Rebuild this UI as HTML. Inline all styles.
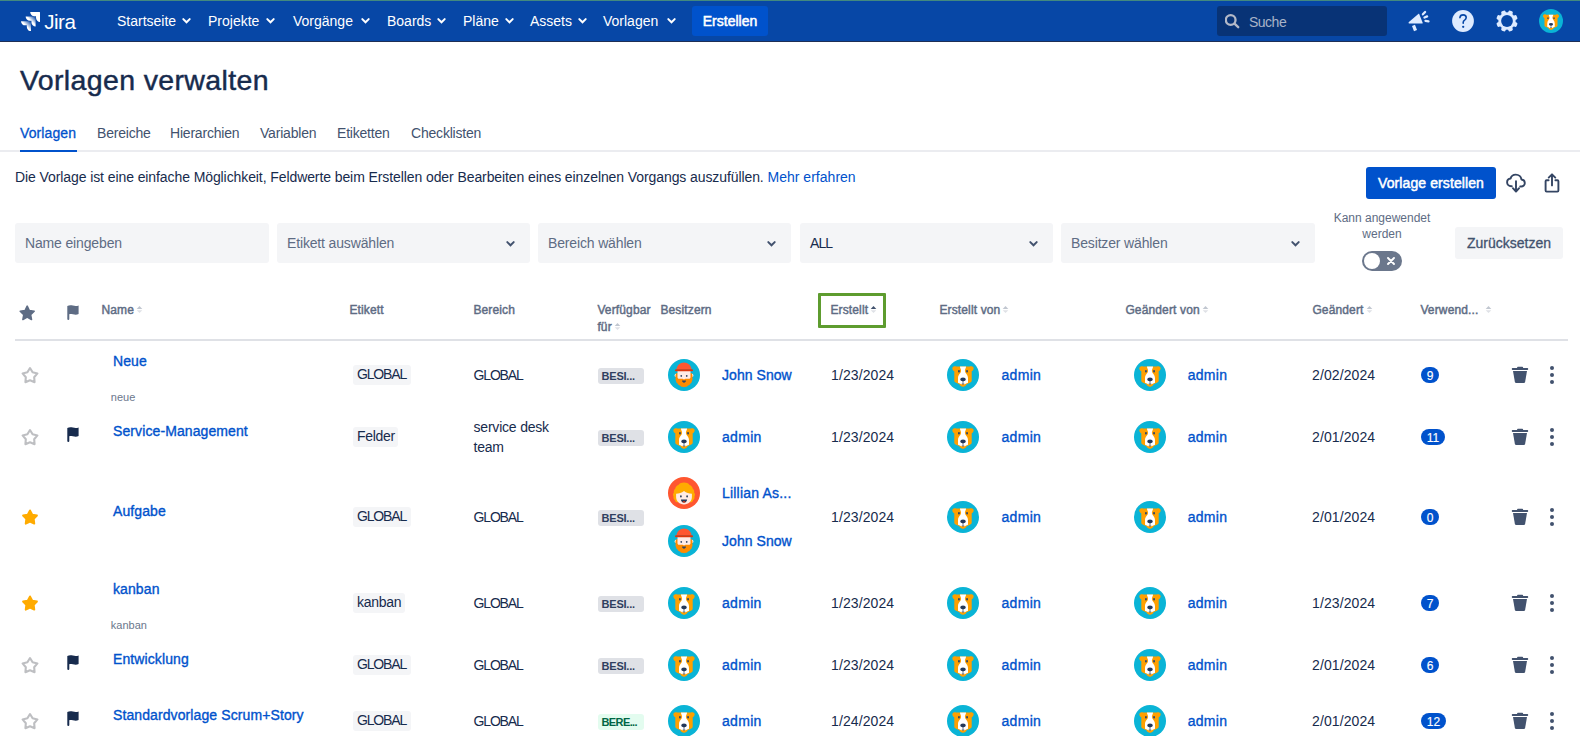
<!DOCTYPE html>
<html lang="de">
<head>
<meta charset="utf-8">
<title>Vorlagen verwalten - Jira</title>
<style>
*{box-sizing:border-box;margin:0;padding:0}
html,body{width:1580px;height:736px;overflow:hidden;background:#fff}
body{font-family:"Liberation Sans",sans-serif;font-size:14px;color:#172B4D;position:relative;-webkit-font-smoothing:antialiased}
a{text-decoration:none;color:inherit}
svg{display:block}
.abs{position:absolute;white-space:nowrap}

/* ---------- top navigation ---------- */
#hdr{position:absolute;left:0;top:0;width:1580px;height:42px;background:#0747A6;border-top:1px solid #43897F;border-bottom:1px solid #1F2F55}
#hdr .logo{position:absolute;left:20.900px;top:10.800px}
#hdr .logotxt{position:absolute;left:44.200px;top:8.800px;font-size:20.600px;line-height:24px;color:#fff;letter-spacing:-0.500px}
#hdr .nav{position:absolute;top:0;height:41px;line-height:41px;color:#fff;font-size:14px;white-space:nowrap}
#hdr .chev{position:absolute;top:16px;color:#fff}
#hdr .create{position:absolute;left:692px;top:5px;width:76px;height:30px;border-radius:3px;background:#0052CC;color:#fff;font-size:14px;line-height:31px;text-align:center;-webkit-text-stroke:.500px #fff}
#hdr .search{position:absolute;left:1217px;top:5px;width:170px;height:30px;border-radius:3px;background:#083376}
#hdr .search span{position:absolute;left:32px;top:0;line-height:32px;font-size:14px;color:#A9B3C8;letter-spacing:-0.5px}
#hdr .search svg{position:absolute;left:8px;top:7px}
#hdr .ico{position:absolute}

/* ---------- page header ---------- */
#title{left:20px;top:62px;font-size:28.500px;line-height:36px;letter-spacing:.360px;font-weight:400;color:#172B4D;-webkit-text-stroke:0.45px #172B4D}
#tabs{position:absolute;left:0;top:117px;width:1580px;height:35px;border-bottom:2px solid #EBECF0}
#tabs a{position:absolute;top:0;line-height:32px;font-size:14px;color:#42526E;white-space:nowrap;letter-spacing:-.200px}
#tabs a.on{color:#0052CC;-webkit-text-stroke:0.3px #0052CC;letter-spacing:.100px}
#tabs .bar{position:absolute;left:20px;top:33px;width:57px;height:2px;background:#0052CC}
#desc{left:15px;top:167px;line-height:20px;font-size:14px;color:#172B4D;letter-spacing:-.090px}
#desc a{color:#0052CC;letter-spacing:.020px}
.btnp{position:absolute;left:1366px;top:167px;width:130px;height:32px;border-radius:3px;background:#0052CC;color:#fff;font-size:14px;line-height:33px;text-align:center;-webkit-text-stroke:.500px #fff;letter-spacing:.100px}

/* ---------- filters ---------- */
.fld{position:absolute;top:223px;height:40px;border-radius:3px;background:#F4F5F7;color:#5E6C84;font-size:14px;line-height:40px;padding-left:10px;white-space:nowrap;letter-spacing:-.150px}
.fld.dark{color:#172B4D}
.fld svg{position:absolute;right:14.500px;top:16.500px}
#kann{left:1322px;top:210px;width:120px;text-align:center;font-size:12px;line-height:16px;color:#5E6C84;white-space:normal}
#tog{position:absolute;left:1362px;top:251px;width:40px;height:20px;border-radius:10px;background:#6B778C}
#tog i{position:absolute;left:2px;top:2px;width:16px;height:16px;border-radius:50%;background:#fff}
#tog svg{position:absolute;left:24.700px;top:6px}
#reset{position:absolute;left:1455px;top:227px;width:108px;height:32px;border-radius:3px;background:#F4F5F7;color:#42526E;font-size:14px;line-height:32px;text-align:center;-webkit-text-stroke:0.3px #42526E}

/* ---------- table ---------- */
#thead{position:absolute;left:15px;top:293px;width:1553px;height:48px;border-bottom:2px solid #DFE1E6}
#thead .th{position:absolute;top:8.700px;font-size:12px;line-height:17px;font-weight:400;color:#5E6C84;white-space:nowrap;letter-spacing:.140px;margin-left:.400px;-webkit-text-stroke:.450px #5E6C84}
#thead .sort{display:inline-block;vertical-align:middle;margin-left:2px;position:relative;top:-1px}
#thead .focus{position:absolute;left:803px;top:0;width:68px;height:35px;border:3px solid #5E9C2F;border-radius:1px}
.row{position:absolute;left:15px;width:1553px}
.row>*{position:absolute;white-space:nowrap}
.vc{top:50%;transform:translateY(-50%)}
.nm{left:98px;font-size:14px;line-height:20px;color:#0052CC;-webkit-text-stroke:0.35px #0052CC;letter-spacing:.100px}
.ds{left:95.800px;font-size:11px;line-height:14px;color:#6B778C}
.tag{left:338.200px;height:20px;padding:0 4px 0 3.800px;border-radius:3px;background:#F4F5F7;line-height:18.800px;font-size:14px;color:#172B4D}
.ber{left:458.500px;font-size:14px;line-height:20px}
.loz{left:583px;margin-top:.900px;width:46px;height:16px;border-radius:3px;background:#DFE1E6;color:#2F3F60;font-size:11px;font-weight:700;line-height:16px;padding-left:3.500px;letter-spacing:-0.2px}
.loz.g{background:#E3FCEF;color:#006644}
.av{width:32px;height:32px}
.lnk{font-size:14px;line-height:20px;color:#0052CC;-webkit-text-stroke:0.35px #0052CC;letter-spacing:.300px}
.dt{font-size:14px;line-height:20px;color:#172B4D;letter-spacing:.100px}
.bdg{left:1406px;height:16px;min-width:18px;padding:0 5.800px;border-radius:8px;background:#0052CC;color:#fff;font-size:12px;line-height:18px;text-align:center;-webkit-text-stroke:.150px #fff}

.st{left:5px}
.fl{left:52.300px;top:50%;margin-top:-9.800px;color:#172B4D}
.o1{left:653px}.o2{left:707px}
.c1{left:816px}
.e1{left:932px}.e2{left:986.500px}
.g1{left:1119px}.g2{left:1172.700px}
.c2{left:1297px}
.tr{left:1496px}.mo{left:1534px}
.up{letter-spacing:-1.150px}
.tag.up{padding-right:4.500px}
.tag.lo{letter-spacing:-.300px;padding-right:3.600px}
</style>
</head>
<body>

<!-- ======= Top navigation ======= -->
<div id="hdr">
  <svg class="logo" width="19.200" height="19.200" viewBox="0 0 24.400 24.400">
    <defs>
      <linearGradient id="lg1" x1="17.800" y1="5.900" x2="12.700" y2="11.200" gradientUnits="userSpaceOnUse"><stop offset=".15" stop-color="#fff" stop-opacity=".15"/><stop offset="1" stop-color="#fff"/></linearGradient>
      <linearGradient id="lg2" x1="12.100" y1="11.700" x2="6.300" y2="17.400" gradientUnits="userSpaceOnUse"><stop offset=".15" stop-color="#fff" stop-opacity=".15"/><stop offset="1" stop-color="#fff"/></linearGradient>
    </defs>
    <path d="M23.400 0H11.700a5.300 5.300 0 0 0 5.300 5.300h2.100v2.100a5.300 5.300 0 0 0 5.300 5.300V1a1 1 0 0 0-1-1z" fill="#fff"/>
    <path d="M17.600 5.800H5.900a5.300 5.300 0 0 0 5.300 5.300h2.100v2.100a5.300 5.300 0 0 0 5.300 5.300V6.800a1 1 0 0 0-1-1z" fill="url(#lg1)"/>
    <path d="M11.700 11.700H0a5.300 5.300 0 0 0 5.300 5.300h2.100v2.100a5.300 5.300 0 0 0 5.300 5.300V12.700a1 1 0 0 0-1-1z" fill="url(#lg2)"/>
  </svg>
  <span class="logotxt">Jira</span>
  <span class="nav" style="left:117px">Startseite</span>
  <span class="nav" style="left:208px">Projekte</span>
  <span class="nav" style="left:293px">Vorgänge</span>
  <span class="nav" style="left:387px">Boards</span>
  <span class="nav" style="left:463px">Pläne</span>
  <span class="nav" style="left:530px">Assets</span>
  <span class="nav" style="left:603px">Vorlagen</span>
  <svg class="chev" style="left:182px" width="10" height="8"><use href="#chev"/></svg>
  <svg class="chev" style="left:266px" width="10" height="8"><use href="#chev"/></svg>
  <svg class="chev" style="left:361px" width="10" height="8"><use href="#chev"/></svg>
  <svg class="chev" style="left:437px" width="10" height="8"><use href="#chev"/></svg>
  <svg class="chev" style="left:505px" width="10" height="8"><use href="#chev"/></svg>
  <svg class="chev" style="left:578px" width="10" height="8"><use href="#chev"/></svg>
  <svg class="chev" style="left:667px" width="10" height="8"><use href="#chev"/></svg>
  <a class="create">Erstellen</a>
  <div class="search"><svg width="16" height="16" viewBox="0 0 16 16"><circle cx="5.700" cy="7" r="4.850" fill="none" stroke="#B3B9C8" stroke-width="2.300"/><path d="M9.500 10.700l3.700 3.500" stroke="#B3B9C8" stroke-width="2.400" stroke-linecap="round"/></svg><span>Suche</span></div>
  <svg class="ico" style="left:1408px;top:9px" width="24" height="24" viewBox="0 0 24 24"><path d="M10.300 3.900c.3-.3.900-.2 1 .3l3.400 8.600c.2.400-.1.800-.6.800H1.500c-.9 0-1.300-1-.6-1.600z" fill="#DEEBFF"/><path d="M5.500 15.400l2 5.200" stroke="#DEEBFF" stroke-width="3.200" stroke-linecap="butt"/><path d="M14.900 4.300l2.200-2.300M16.500 7.500l2.600-1.100M17.500 10.800l3 .5" stroke="#DEEBFF" stroke-width="2.300" stroke-linecap="round"/></svg>
  <svg class="ico" style="left:1452px;top:9px" width="22" height="22" viewBox="0 0 22 22"><circle cx="11" cy="11" r="10.900" fill="#DEEBFF"/><path d="M7.900 7.600c.2-1.700 1.500-2.700 3.200-2.700 1.800 0 3.100 1.100 3.100 2.700 0 1.200-.7 1.900-1.600 2.500-1 .6-1.400 1.100-1.400 2.300v.9" fill="none" stroke="#0747A6" stroke-width="1.600" stroke-linecap="round"/><circle cx="11.200" cy="16.800" r="1.150" fill="#0747A6"/></svg>
  <svg class="ico" style="left:1495px;top:8px" width="24" height="24" viewBox="0 0 24 24"><g fill="#DEEBFF" transform="rotate(22.500 12 12)"><circle cx="12" cy="12" r="8.700"/><rect id="tooth" x="9.700" y="1.200" width="4.600" height="5" rx="1.400"/><use href="#tooth" transform="rotate(45 12 12)"/><use href="#tooth" transform="rotate(90 12 12)"/><use href="#tooth" transform="rotate(135 12 12)"/><use href="#tooth" transform="rotate(180 12 12)"/><use href="#tooth" transform="rotate(225 12 12)"/><use href="#tooth" transform="rotate(270 12 12)"/><use href="#tooth" transform="rotate(315 12 12)"/></g><circle cx="12" cy="12" r="5.900" fill="#0747A6"/></svg>
  <svg class="ico" style="left:1539px;top:8px" width="24" height="24"><use href="#dog"/></svg>
</div>

<!-- ======= Page heading ======= -->
<h1 id="title" class="abs">Vorlagen verwalten</h1>

<div id="tabs">
  <a class="on" style="left:20px">Vorlagen</a>
  <a style="left:97px">Bereiche</a>
  <a style="left:170px">Hierarchien</a>
  <a style="left:260px">Variablen</a>
  <a style="left:337px">Etiketten</a>
  <a style="left:411px">Checklisten</a>
  <span class="bar"></span>
</div>

<p id="desc" class="abs">Die Vorlage ist eine einfache Möglichkeit, Feldwerte beim Erstellen oder Bearbeiten eines einzelnen Vorgangs auszufüllen. <a>Mehr erfahren</a></p>
<a class="btnp">Vorlage erstellen</a>
<svg class="abs" style="left:1505px;top:172px" width="22" height="22" viewBox="0 0 22 22"><path d="M6.800 14.200H6.200c-2.300 0-4.100-1.700-4.100-3.900 0-2 1.500-3.600 3.500-3.800C6.200 4.200 8.300 2.600 10.800 2.600c2.900 0 5.300 2.100 5.600 4.900 1.900.2 3.400 1.700 3.400 3.600 0 1.900-1.600 3.400-3.600 3.400h-1" fill="none" stroke="#344563" stroke-width="1.900" stroke-linecap="round" stroke-linejoin="round"/><path d="M11 9.200v9.600M7.900 16.200l3.100 3.300 3.100-3.300" fill="none" stroke="#344563" stroke-width="1.900" stroke-linecap="round" stroke-linejoin="round"/></svg>
<svg class="abs" style="left:1542px;top:172px" width="20" height="22" viewBox="0 0 20 22"><path d="M6.600 8.200H4.600c-.6 0-1 .4-1 1v9.400c0 .6.400 1 1 1h10.800c.6 0 1-.4 1-1V9.200c0-.6-.4-1-1-1h-2" fill="none" stroke="#344563" stroke-width="1.900" stroke-linecap="round" stroke-linejoin="round"/><path d="M10 13.400V3M6.700 5.600L10 2.300l3.300 3.300" fill="none" stroke="#344563" stroke-width="1.900" stroke-linecap="round" stroke-linejoin="round"/></svg>

<!-- ======= Filters ======= -->
<div class="fld" style="left:15px;width:254px">Name eingeben</div>
<div class="fld" style="left:277px;width:253px">Etikett auswählen<svg width="10" height="8" style="color:#42526E"><use href="#chev"/></svg></div>
<div class="fld" style="left:538px;width:253px">Bereich wählen<svg width="10" height="8" style="color:#42526E"><use href="#chev"/></svg></div>
<div class="fld dark" style="left:800px;width:253px;letter-spacing:-.900px">ALL<svg width="10" height="8" style="color:#42526E"><use href="#chev"/></svg></div>
<div class="fld" style="left:1061px;width:254px">Besitzer wählen<svg width="10" height="8" style="color:#42526E"><use href="#chev"/></svg></div>
<div id="kann" class="abs">Kann angewendet werden</div>
<div id="tog"><i></i><svg width="8" height="8" viewBox="0 0 8 8"><path d="M1 1l6 6M7 1L1 7" stroke="#fff" stroke-width="1.900" stroke-linecap="round"/></svg></div>
<a id="reset">Zurücksetzen</a>

<!-- ======= SVG symbol library (icons / avatars only) ======= -->
<svg width="0" height="0" style="position:absolute">
  <defs>
    <symbol id="dog" viewBox="0 0 32 32">
      <circle cx="16" cy="16" r="16" fill="#0AB4D6"/>
      <path d="M9.300 7.500H22.700C23.800 6.900 25.600 7 26.400 8.300 27 9.600 26.600 11.300 24.700 12.300V21.600C24.700 22.600 24.200 23.200 23.400 23.500L19.600 25.200C19.200 26.600 17.800 27.400 16 27.400S12.800 26.600 12.400 25.200L8.600 23.500C7.800 23.200 7.300 22.600 7.300 21.600V12.300C5.400 11.300 5 9.600 5.600 8.300 6.400 7 8.200 6.900 9.300 7.500Z" fill="#FFA000"/>
      <path d="M12.900 7.500h6.200c-.2 1.700-1.200 2.600-1.200 4.300 0 2.400 3.100 3.600 3.100 7.400v4.500l-2.400 1c-.5.9-1.400 1.300-2.600 1.300s-2.100-.4-2.600-1.300l-2.400-1v-4.500c0-3.800 3.100-5 3.100-7.400 0-1.700-1-2.600-1.200-4.300z" fill="#fff"/>
      <path d="M13 25.200h6c-.4 1.500-1.500 2.300-3 2.300s-2.600-.8-3-2.300z" fill="#FFA000"/>
      <rect x="11" y="11.100" width="1.900" height="2.300" rx=".9" fill="#344563"/>
      <rect x="19.100" y="11.100" width="1.900" height="2.300" rx=".9" fill="#344563"/>
      <ellipse cx="16" cy="20.400" rx="2.800" ry="1.800" fill="#253858"/>
      <path d="M16 21.500v2.300" stroke="#253858" stroke-width=".8"/>
      <path d="M14.600 24.400h2.800c-.2.700-.7 1-1.400 1s-1.200-.3-1.400-1z" fill="#253858"/>
    </symbol>
    <symbol id="man" viewBox="0 0 32 32">
      <circle cx="16" cy="16" r="16" fill="#0AB4D6"/>
      <ellipse cx="7.900" cy="16.400" rx="1.300" ry="1.600" fill="#FFEBE6"/>
      <ellipse cx="24.100" cy="16.400" rx="1.300" ry="1.600" fill="#FFEBE6"/>
      <path d="M8.300 14.300c.5-.5 1-.5 1.400 0l.9 4.500h10.800l.9-4.500c.4-.5.900-.5 1.400 0 .6 1.500 1.200 3.200.6 4.700.6 1.100.2 2.200-.4 2.900.1 1.200-.6 2.100-1.600 2.600-.2 1.100-1.100 1.900-2.300 2-.6 1.100-1.700 1.600-2.900 1.300-.7.600-1.500.6-2.200 0-1.200.3-2.300-.2-2.900-1.300-1.200-.1-2.100-.9-2.300-2-1-.5-1.700-1.400-1.600-2.600-.6-.7-1-1.800-.4-2.900-.6-1.500 0-3.200.6-4.700z" fill="#FF8B00"/>
      <path d="M9.500 12h13v6.200c0 .9-.6 1.500-1.500 1.500h-3.600l-1.400.9-1.400-.9H11c-.9 0-1.500-.6-1.500-1.500z" fill="#FFEBE6"/>
      <path d="M8.500 10.600c.3-4.100 3.500-7 7.500-7s7.200 2.900 7.500 7z" fill="#FF5630"/>
      <rect x="7" y="10.200" width="18" height="2" rx="1" fill="#DE350B"/>
      <rect x="12.400" y="16" width="1.700" height="1.900" rx=".8" fill="#344563"/>
      <rect x="17.900" y="16" width="1.700" height="1.900" rx=".8" fill="#344563"/>
      <path d="M14 21.600h4c-.1 1.400-.9 2.100-2 2.100s-1.900-.7-2-2.100z" fill="#344563"/>
    </symbol>
    <symbol id="woman" viewBox="0 0 32 32">
      <circle cx="16" cy="16" r="16" fill="#FF5630"/>
      <path d="M16 5.600c2.300 0 4.300.8 5.600 2.300 1.700.6 2.900 2 3.200 3.800 1.200 1 1.700 2.500 1.300 3.900 1 1.100 1.200 2.600.400 3.800.3 1.400-.2 2.800-1.400 3.600-.2 1.100-.9 1.900-2 2.200H8.900c-1.100-.3-1.800-1.100-2-2.200-1.200-.8-1.700-2.200-1.400-3.600-.8-1.200-.6-2.700.400-3.800-.4-1.400.1-2.900 1.300-3.900.3-1.800 1.500-3.200 3.200-3.800 1.300-1.500 3.300-2.300 5.600-2.300z" fill="#FFAB00"/>
      <path d="M8.100 16.800c2.900-.1 5.600-.9 7.900-2.800 2.300 1.900 5 2.700 7.900 2.800v3.300c0 4.300-3.500 7.400-7.900 7.400s-7.900-3.100-7.900-7.400z" fill="#FFEBE6"/>
      <rect x="12" y="18.300" width="1.800" height="2.100" rx=".9" fill="#344563"/>
      <rect x="18.200" y="18.300" width="1.800" height="2.100" rx=".9" fill="#344563"/>
      <path d="M12.900 22.400h6.200c-.1 2-1.400 3.200-3.100 3.200s-3-1.200-3.100-3.200z" fill="#253858"/>
      <path d="M14.500 24.900c.4-.6.9-.9 1.500-.9s1.100.3 1.500.9c-.4.400-.9.700-1.500.7s-1.100-.3-1.500-.7z" fill="#DE350B"/>
    </symbol>
    <symbol id="star-o" viewBox="0 0 20 20">
      <path d="M10.00 3.05L12.59 7.29L17.42 8.44L14.18 12.21L14.58 17.16L10.00 15.25L5.42 17.16L5.82 12.21L2.58 8.44L7.41 7.29z" fill="none" stroke="#BEBFC2" stroke-width="2.100" stroke-linejoin="round"/>
    </symbol>
    <symbol id="star-f" viewBox="0 0 20 20">
      <path d="M10.00 3.45L12.29 7.59L16.94 8.49L13.71 11.96L14.29 16.66L10.00 14.65L5.71 16.66L6.29 11.96L3.06 8.49L7.71 7.59z" fill="#FFAB00" stroke="#FFAB00" stroke-width="1.900" stroke-linejoin="round"/>
    </symbol>
    <symbol id="flag" viewBox="0 0 12 15">
      <path d="M.300 1.100C1.900.1 3.900.1 5.900.6s3.900.6 5.700-.2v8.700c-1.800.8-3.700.7-5.700.2s-2.700-.5-3.600-.1v4.800a1 1 0 0 1-2 0z" fill="currentColor"/>
    </symbol>
    <symbol id="trash" viewBox="0 0 18 18">
      <path d="M6.100 1.600c0-.5.300-.8.800-.8h4.400c.5 0 .8.300.8.800v.4h4.100c.6 0 1 .4 1 1s-.4 1-1 1H1.800c-.6 0-1-.4-1-1s.4-1 1-1h4.300z" fill="#42526E"/>
      <path d="M2 5.100h14l-1.900 11c-.1.500-.4.800-.9.800H4.800c-.5 0-.8-.3-.9-.8z" fill="#42526E"/>
    </symbol>
    <symbol id="more" viewBox="0 0 6 20">
      <circle cx="3" cy="3" r="2" fill="#42526E"/><circle cx="3" cy="10" r="2" fill="#42526E"/><circle cx="3" cy="17" r="2" fill="#42526E"/>
    </symbol>
    <symbol id="sort" viewBox="0 0 7 11">
      <path d="M3.500 2.100L6.300 4.900H.700z" fill="#C1C7D0"/><path d="M3.500 9.100L6.300 6.300H.700z" fill="#DFE1E6"/>
    </symbol>
    <symbol id="sort-up" viewBox="0 0 7 11">
      <path d="M3.500 2.100L6.300 4.900H.700z" fill="#42526E"/><path d="M3.500 9.100L6.300 6.300H.700z" fill="#DFE1E6"/>
    </symbol>
    <symbol id="chev" viewBox="0 0 10 8">
      <path d="M1.300 2.100L4.500 5.300l3.200-3.200" fill="none" stroke="currentColor" stroke-width="2" stroke-linecap="round" stroke-linejoin="miter"/>
    </symbol>
  </defs>
</svg>

<!-- ======= Table ======= -->
<div id="thead">
  <svg class="abs" style="left:2.800px;top:10.500px;color:#5E6C84" width="18.400" height="18.400" viewBox="0 0 20 20"><path d="M10 2.300l2.300 4.900 5.300.7-3.900 3.700 1 5.300L10 14.300l-4.700 2.600 1-5.300-3.900-3.700 5.300-.7z" fill="#5E6C84" stroke="#5E6C84" stroke-width="1.700" stroke-linejoin="round"/></svg>
  <svg class="abs" style="left:52.300px;top:12.200px;color:#5E6C84" width="12" height="15"><use href="#flag"/></svg>
  <span class="th" style="left:86px">Name<svg class="sort" width="7" height="11"><use href="#sort"/></svg></span>
  <span class="th" style="left:334px">Etikett</span>
  <span class="th" style="left:458px">Bereich</span>
  <span class="th" style="left:582px">Verfügbar<br>für<svg class="sort" width="7" height="11"><use href="#sort"/></svg></span>
  <span class="th" style="left:645px">Besitzern</span>
  <span class="focus"></span>
  <span class="th" style="left:815px">Erstellt<svg class="sort" width="7" height="11"><use href="#sort-up"/></svg></span>
  <span class="th" style="left:924px">Erstellt von<svg class="sort" width="7" height="11"><use href="#sort"/></svg></span>
  <span class="th" style="left:1110px">Geändert von<svg class="sort" width="7" height="11"><use href="#sort"/></svg></span>
  <span class="th" style="left:1297px">Geändert<svg class="sort" width="7" height="11"><use href="#sort"/></svg></span>
  <span class="th" style="left:1405px">Verwend...<svg class="sort" style="margin-left:6.500px" width="7" height="11"><use href="#sort"/></svg></span>
</div>

<!-- row 1 -->
<div class="row" style="top:341px;height:68px">
  <svg class="vc st" width="20" height="20"><use href="#star-o"/></svg>
  <a class="nm" style="top:10px">Neue</a>
  <span class="ds" style="top:49px">neue</span>
  <span class="tag vc up">GLOBAL</span>
  <span class="ber vc up">GLOBAL</span>
  <span class="loz vc">BESI...</span>
  <svg class="av vc o1"><use href="#man"/></svg><a class="lnk vc o2" style="letter-spacing:.050px">John Snow</a>
  <span class="dt vc c1">1/23/2024</span>
  <svg class="av vc e1"><use href="#dog"/></svg><a class="lnk vc e2">admin</a>
  <svg class="av vc g1"><use href="#dog"/></svg><a class="lnk vc g2">admin</a>
  <span class="dt vc c2">2/02/2024</span>
  <span class="bdg vc">9</span>
  <svg class="vc tr" width="18" height="18"><use href="#trash"/></svg>
  <svg class="vc mo" width="6" height="20"><use href="#more"/></svg>
</div>

<!-- row 2 -->
<div class="row" style="top:409px;height:56px">
  <svg class="vc st" width="20" height="20"><use href="#star-o"/></svg>
  <svg class="fl" width="12" height="15"><use href="#flag"/></svg>
  <a class="nm" style="top:12px">Service-Management</a>
  <span class="tag vc lo">Felder</span>
  <span class="ber vc" style="white-space:normal;width:88px;letter-spacing:-.200px">service desk team</span>
  <span class="loz vc">BESI...</span>
  <svg class="av vc o1"><use href="#dog"/></svg><a class="lnk vc o2">admin</a>
  <span class="dt vc c1">1/23/2024</span>
  <svg class="av vc e1"><use href="#dog"/></svg><a class="lnk vc e2">admin</a>
  <svg class="av vc g1"><use href="#dog"/></svg><a class="lnk vc g2">admin</a>
  <span class="dt vc c2">2/01/2024</span>
  <span class="bdg vc">11</span>
  <svg class="vc tr" width="18" height="18"><use href="#trash"/></svg>
  <svg class="vc mo" width="6" height="20"><use href="#more"/></svg>
</div>

<!-- row 3 -->
<div class="row" style="top:465px;height:104px">
  <svg class="vc st" width="20" height="20"><use href="#star-f"/></svg>
  <a class="nm" style="top:36px">Aufgabe</a>
  <span class="tag vc up">GLOBAL</span>
  <span class="ber vc up">GLOBAL</span>
  <span class="loz vc">BESI...</span>
  <svg class="av o1" style="top:12px"><use href="#woman"/></svg><a class="lnk o2" style="top:18px;letter-spacing:.200px">Lillian As...</a>
  <svg class="av o1" style="top:60px"><use href="#man"/></svg><a class="lnk o2" style="top:66px;letter-spacing:.050px">John Snow</a>
  <span class="dt vc c1">1/23/2024</span>
  <svg class="av vc e1"><use href="#dog"/></svg><a class="lnk vc e2">admin</a>
  <svg class="av vc g1"><use href="#dog"/></svg><a class="lnk vc g2">admin</a>
  <span class="dt vc c2">2/01/2024</span>
  <span class="bdg vc">0</span>
  <svg class="vc tr" width="18" height="18"><use href="#trash"/></svg>
  <svg class="vc mo" width="6" height="20"><use href="#more"/></svg>
</div>

<!-- row 4 -->
<div class="row" style="top:569px;height:68px">
  <svg class="vc st" width="20" height="20"><use href="#star-f"/></svg>
  <a class="nm" style="top:10px">kanban</a>
  <span class="ds" style="top:49px">kanban</span>
  <span class="tag vc lo">kanban</span>
  <span class="ber vc up">GLOBAL</span>
  <span class="loz vc">BESI...</span>
  <svg class="av vc o1"><use href="#dog"/></svg><a class="lnk vc o2">admin</a>
  <span class="dt vc c1">1/23/2024</span>
  <svg class="av vc e1"><use href="#dog"/></svg><a class="lnk vc e2">admin</a>
  <svg class="av vc g1"><use href="#dog"/></svg><a class="lnk vc g2">admin</a>
  <span class="dt vc c2">1/23/2024</span>
  <span class="bdg vc">7</span>
  <svg class="vc tr" width="18" height="18"><use href="#trash"/></svg>
  <svg class="vc mo" width="6" height="20"><use href="#more"/></svg>
</div>

<!-- row 5 -->
<div class="row" style="top:637px;height:56px">
  <svg class="vc st" width="20" height="20"><use href="#star-o"/></svg>
  <svg class="fl" width="12" height="15"><use href="#flag"/></svg>
  <a class="nm" style="top:12px">Entwicklung</a>
  <span class="tag vc up">GLOBAL</span>
  <span class="ber vc up">GLOBAL</span>
  <span class="loz vc">BESI...</span>
  <svg class="av vc o1"><use href="#dog"/></svg><a class="lnk vc o2">admin</a>
  <span class="dt vc c1">1/23/2024</span>
  <svg class="av vc e1"><use href="#dog"/></svg><a class="lnk vc e2">admin</a>
  <svg class="av vc g1"><use href="#dog"/></svg><a class="lnk vc g2">admin</a>
  <span class="dt vc c2">2/01/2024</span>
  <span class="bdg vc">6</span>
  <svg class="vc tr" width="18" height="18"><use href="#trash"/></svg>
  <svg class="vc mo" width="6" height="20"><use href="#more"/></svg>
</div>

<!-- row 6 -->
<div class="row" style="top:693px;height:56px">
  <svg class="vc st" width="20" height="20"><use href="#star-o"/></svg>
  <svg class="fl" width="12" height="15"><use href="#flag"/></svg>
  <a class="nm" style="top:12px">Standardvorlage Scrum+Story</a>
  <span class="tag vc up">GLOBAL</span>
  <span class="ber vc up">GLOBAL</span>
  <span class="loz g vc" style="letter-spacing:-.600px">BERE...</span>
  <svg class="av vc o1"><use href="#dog"/></svg><a class="lnk vc o2">admin</a>
  <span class="dt vc c1">1/24/2024</span>
  <svg class="av vc e1"><use href="#dog"/></svg><a class="lnk vc e2">admin</a>
  <svg class="av vc g1"><use href="#dog"/></svg><a class="lnk vc g2">admin</a>
  <span class="dt vc c2">2/01/2024</span>
  <span class="bdg vc">12</span>
  <svg class="vc tr" width="18" height="18"><use href="#trash"/></svg>
  <svg class="vc mo" width="6" height="20"><use href="#more"/></svg>
</div>

</body>
</html>
